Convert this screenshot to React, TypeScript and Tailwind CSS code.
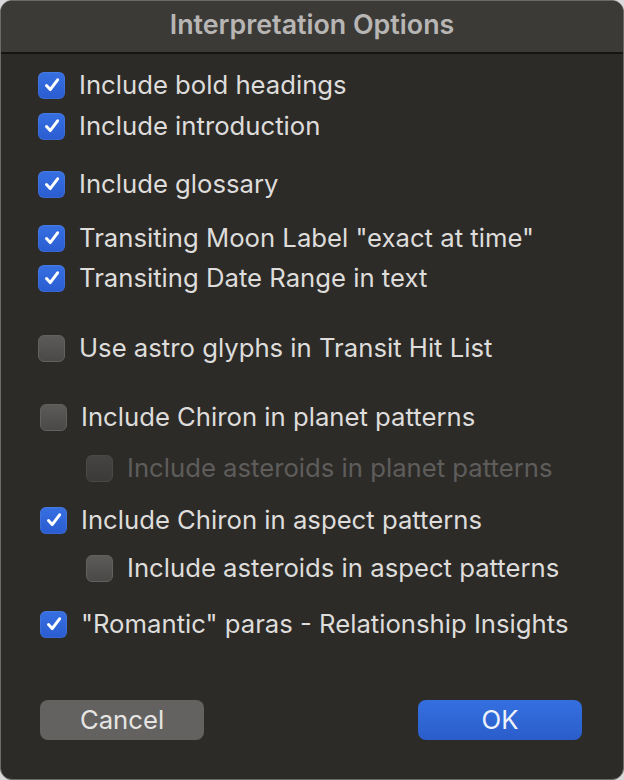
import React from "react";

type Row = {
  label: string;
  checked: boolean;
  indent?: boolean;
  disabled?: boolean;
  mt: string;
  shift?: boolean;
};

const rows: Row[] = [
  { label: "Include bold headings", checked: true, mt: "mt-0" },
  { label: "Include introduction", checked: true, mt: "mt-px" },
  { label: "Include glossary", checked: true, mt: "mt-[18px]" },
  { label: 'Transiting Moon Label "exact at time"', checked: true, mt: "mt-[14px]" },
  { label: "Transiting Date Range in text", checked: true, mt: "mt-0" },
  { label: "Use astro glyphs in Transit Hit List", checked: false, mt: "mt-[30px]" },
  { label: "Include Chiron in planet patterns", checked: false, mt: "mt-[29px]", shift: true },
  { label: "Include asteroids in planet patterns", checked: false, indent: true, disabled: true, mt: "mt-[11px]" },
  { label: "Include Chiron in aspect patterns", checked: true, mt: "mt-[12px]", shift: true },
  { label: "Include asteroids in aspect patterns", checked: false, indent: true, mt: "mt-[8px]" },
  { label: '"Romantic" paras - Relationship Insights', checked: true, mt: "mt-[16px]", shift: true },
];

function Box({ checked, disabled }: { checked: boolean; disabled?: boolean }) {
  if (checked) {
    return (
      <div className="w-[27px] h-[27px] rounded-[6px] bg-gradient-to-b from-[#3770e2] to-[#2a5cd0] flex items-center justify-center shrink-0 shadow-[inset_0_0_0_1px_rgba(255,255,255,0.08)]">
        <svg width="18" height="18" viewBox="0 0 18 18" fill="none">
          <path d="M3.5 9.6 L7.2 13.6 L14.6 3.8" stroke="white" strokeWidth="3" strokeLinecap="round" strokeLinejoin="round" />
        </svg>
      </div>
    );
  }
  return (
    <div
      className={
        disabled
          ? "w-[27px] h-[27px] rounded-[6px] bg-gradient-to-b from-[#454442] to-[#3b3a38] border border-[#4a4947] shrink-0"
          : "w-[27px] h-[27px] rounded-[6px] bg-gradient-to-b from-[#5c5b59] to-[#4a4947] border border-[#626160] shrink-0"
      }
    />
  );
}

export default function App() {
  return (
    <div className="w-[624px] h-[780px] bg-[#d9d9d9]" style={{ fontFamily: "Inter, 'Noto Sans', sans-serif" }}>
      <div className="w-full h-full rounded-[12px] border border-[#6a6a68] bg-[#2d2b28] overflow-hidden flex flex-col">
        <div className="h-[53px] bg-[#3b3a37] border-b-2 border-[#151515] flex items-center justify-center shrink-0 pb-[4px]">
          <span className="text-[#b7b6b4] text-[26.8px] font-semibold">Interpretation Options</span>
        </div>
        <div className="flex flex-col pt-[11px] pl-[37px]">
          {rows.map((r, i) => (
            <div
              key={i}
              className={`${r.mt} h-[40px] flex items-center gap-[14px] ${r.indent ? "pl-[48px]" : r.shift ? "pl-[2px]" : ""}`}
            >
              <Box checked={r.checked} disabled={r.disabled} />
              <span className={`text-[25.7px] ${r.disabled ? "text-[#5e5d5b]" : "text-[#dedddb]"}`}>{r.label}</span>
            </div>
          ))}
        </div>
        <div className="mt-[56px] flex justify-between pl-[39px] pr-[41px]">
          <button className="w-[164px] h-[40px] rounded-[8px] bg-[#636260] text-[#e6e5e3] text-[25.7px] flex items-center justify-center">
            Cancel
          </button>
          <button className="w-[164px] h-[40px] rounded-[8px] bg-gradient-to-b from-[#3570e0] to-[#2a5dca] text-[#eef2fb] text-[25.7px] flex items-center justify-center">
            OK
          </button>
        </div>
      </div>
    </div>
  );
}
